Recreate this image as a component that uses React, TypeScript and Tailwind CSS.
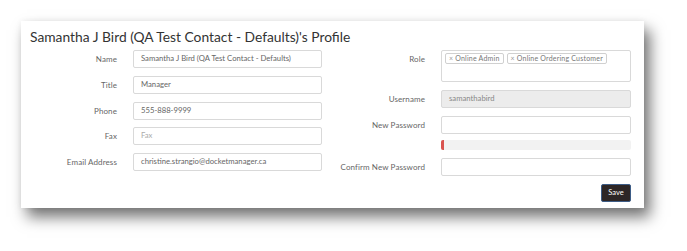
import React from 'react';

const font = { fontFamily: 'Lato, "Open Sans", sans-serif' };

const Field: React.FC<{ label: string; children: React.ReactNode }> = ({ label, children }) => (
  <div className="flex items-start">
    <div className="w-[87px] h-[18px] flex items-center justify-end text-[8px] tracking-[0.1px] text-[#666] whitespace-nowrap">{label}</div>
    <div className="ml-[16px]">{children}</div>
  </div>
);

const TextInput: React.FC<{ value?: string; placeholder?: string; disabled?: boolean; w: string }> = ({ value, placeholder, disabled, w }) => (
  <div
    className={`${w} h-[18px] border border-[#d9d9d9] rounded-[2px] flex items-center px-[7px] text-[7.7px] whitespace-nowrap ${disabled ? 'bg-[#ececec] text-[#888]' : 'bg-white text-[#666]'}`}
  >
    {value ? value : <span className="text-[#aaa]">{placeholder}</span>}
  </div>
);

const Chip: React.FC<{ text: string }> = ({ text }) => (
  <span className="h-[11px] border border-[#d0d0d0] rounded-[2px] px-[3px] flex items-center text-[7px] tracking-[0.2px] text-[#777] bg-white whitespace-nowrap">
    <span className="mr-[2px] text-[#999]">×</span>
    {text}
  </span>
);

export default function App() {
  return (
    <div className="w-[687px] h-[251px] bg-white pt-[21px] pl-[21px]" style={font}>
      <div className="w-[623px] h-[187px] bg-white shadow-[6px_9px_14px_rgba(0,0,0,0.55),0_0_6px_rgba(0,0,0,0.06)] pl-[9px] pt-[6px]">
        <h1 className="text-[13.8px] leading-[20px] text-[#333] font-normal">
          Samantha J Bird (QA Test Contact - Defaults)'s Profile
        </h1>
        <div className="flex mt-[3px]">
          <div className="flex flex-col gap-[7.75px]">
            <Field label="Name"><TextInput w="w-[189px]" value="Samantha J Bird (QA Test Contact - Defaults)" /></Field>
            <Field label="Title"><TextInput w="w-[189px]" value="Manager" /></Field>
            <Field label="Phone"><TextInput w="w-[189px]" value="555-888-9999" /></Field>
            <Field label="Fax"><TextInput w="w-[189px]" placeholder="Fax" /></Field>
            <Field label="Email Address"><TextInput w="w-[189px]" value="christine.strangio@docketmanager.ca" /></Field>
          </div>
          <div className="flex flex-col ml-[16px]">
            <Field label="Role">
              <div className="w-[190px] h-[32px] border border-[#d9d9d9] rounded-[2px] bg-white flex items-start gap-[3px] pt-[2px] pl-[3px]">
                <Chip text="Online Admin" />
                <Chip text="Online Ordering Customer" />
              </div>
            </Field>
            <div className="mt-[8px]">
              <Field label="Username"><TextInput w="w-[190px]" value="samanthabird" disabled /></Field>
            </div>
            <div className="mt-[8px]">
              <Field label="New Password"><TextInput w="w-[190px]" /></Field>
            </div>
            <div className="mt-[6px] ml-[103px] w-[190px] h-[10px] bg-[#f2f2f2] rounded-[2px] overflow-hidden flex">
              <div className="w-[3px] h-full bg-[#d9534f]" />
            </div>
            <div className="mt-[8px]">
              <Field label="Confirm New Password"><TextInput w="w-[190px]" /></Field>
            </div>
            <div className="mt-[8px] flex justify-end w-[293px]">
              <button className="w-[30px] h-[18px] bg-[#2d2626] border border-[#3d5c86] rounded-[2px] text-white text-[7.5px] flex items-center justify-center">
                Save
              </button>
            </div>
          </div>
        </div>
      </div>
    </div>
  );
}
